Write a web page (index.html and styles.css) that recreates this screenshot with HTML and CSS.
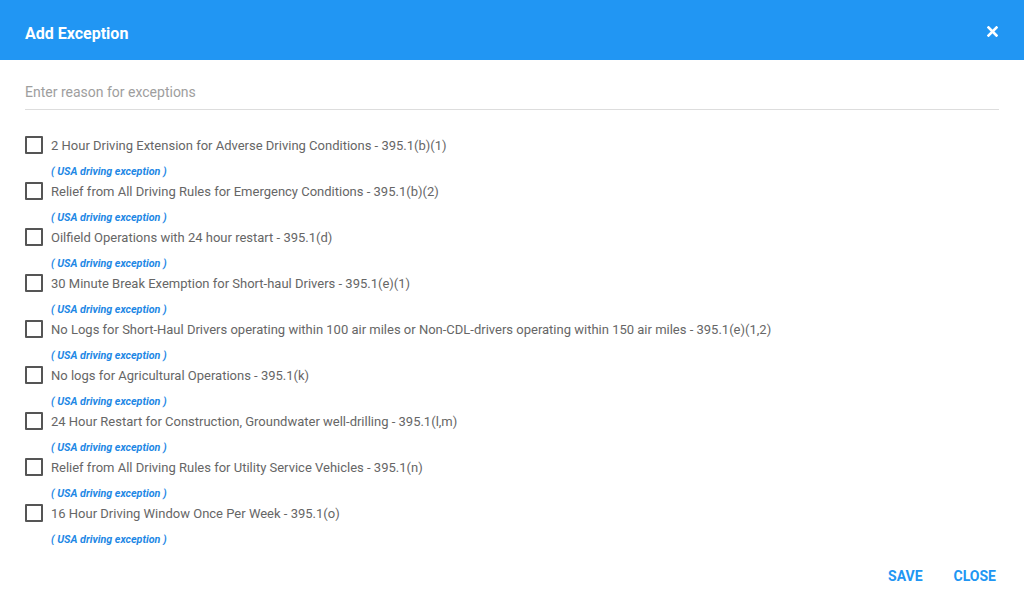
FILE: index.html
```html
<!DOCTYPE html>
<html lang="en">
<head>
    <meta charset="UTF-8">
    <meta name="viewport" content="width=device-width, initial-scale=1.0">
    <title>Add Exception</title>
    <link rel="stylesheet" href="styles.css">
</head>
<body>

    <div class="dialog">
        <div class="dialog-header">
            <h2>Add Exception</h2>
            <span class="close" title="Close">
                <svg width="11" height="11" viewBox="0 0 11 11">
                    <path d="M1.5 1.5 L9.5 9.5 M9.5 1.5 L1.5 9.5" stroke="#fff" stroke-width="2.6" stroke-linecap="square"/>
                </svg>
            </span>
        </div>

        <div class="dialog-body">
            <input type="text" class="reason" placeholder="Enter reason for exceptions">

            <ul class="exception-list">
                <li>
                    <label><input type="checkbox"><span class="box"></span>2 Hour Driving Extension for Adverse Driving Conditions - 395.1(b)(1)</label>
                    <div class="region">( USA driving exception )</div>
                </li>
                <li>
                    <label><input type="checkbox"><span class="box"></span>Relief from All Driving Rules for Emergency Conditions - 395.1(b)(2)</label>
                    <div class="region">( USA driving exception )</div>
                </li>
                <li>
                    <label><input type="checkbox"><span class="box"></span>Oilfield Operations with 24 hour restart - 395.1(d)</label>
                    <div class="region">( USA driving exception )</div>
                </li>
                <li>
                    <label><input type="checkbox"><span class="box"></span>30 Minute Break Exemption for Short-haul Drivers - 395.1(e)(1)</label>
                    <div class="region">( USA driving exception )</div>
                </li>
                <li>
                    <label><input type="checkbox"><span class="box"></span>No Logs for Short-Haul Drivers operating within 100 air miles or Non-CDL-drivers operating within 150 air miles - 395.1(e)(1,2)</label>
                    <div class="region">( USA driving exception )</div>
                </li>
                <li>
                    <label><input type="checkbox"><span class="box"></span>No logs for Agricultural Operations - 395.1(k)</label>
                    <div class="region">( USA driving exception )</div>
                </li>
                <li>
                    <label><input type="checkbox"><span class="box"></span>24 Hour Restart for Construction, Groundwater well-drilling - 395.1(l,m)</label>
                    <div class="region">( USA driving exception )</div>
                </li>
                <li>
                    <label><input type="checkbox"><span class="box"></span>Relief from All Driving Rules for Utility Service Vehicles - 395.1(n)</label>
                    <div class="region">( USA driving exception )</div>
                </li>
                <li>
                    <label><input type="checkbox"><span class="box"></span>16 Hour Driving Window Once Per Week - 395.1(o)</label>
                    <div class="region">( USA driving exception )</div>
                </li>
            </ul>
        </div>

        <div class="dialog-footer">
            <button class="flat-button">Save</button>
            <button class="flat-button">Close</button>
        </div>
    </div>

</body>
</html>
```

FILE: styles.css
```css
body {
    font-family: Roboto, "Liberation Sans", sans-serif;
    margin: 0;
    padding: 0;
    background-color: white;
}

.dialog {
    width: 1024px;
    height: 608px;
    display: flex;
    flex-direction: column;
    background: white;
}

.dialog-header {
    height: 60px;
    background-color: #2196F3;
    padding: 0 26px 0 25px;
    display: flex;
    align-items: center;
    justify-content: space-between;
    box-sizing: border-box;
}

.dialog-header h2 {
    margin: 6px 0 0;
    color: white;
    font-size: 16px;
    font-weight: bold;
}

.close {
    display: flex;
    margin-top: 2px;
    cursor: pointer;
}

.dialog-body {
    padding: 15px 25px 0;
}

.reason {
    display: block;
    width: 100%;
    height: 35px;
    box-sizing: border-box;
    border: none;
    border-bottom: 1px solid #ddd;
    padding: 0;
    font-family: inherit;
    font-size: 14px;
    color: #444;
    outline: none;
}

.reason::placeholder {
    color: #9e9e9e;
}

.exception-list {
    list-style: none;
    padding: 0;
    margin: 26px 0 0;
    height: 409px;
    overflow: hidden;
}

.exception-list li {
    height: 46px;
}

.exception-list label {
    display: flex;
    align-items: center;
    height: 18px;
    font-size: 13px;
    color: #666;
    cursor: pointer;
}

.exception-list input {
    display: none;
}

.box {
    width: 18px;
    height: 18px;
    box-sizing: border-box;
    border: 2px solid #555;
    border-radius: 1px;
    margin-right: 8px;
    flex-shrink: 0;
}

.exception-list input:checked + .box {
    background: #2196F3;
    border-color: #2196F3;
}

.region {
    margin: 11px 0 0 26px;
    line-height: 13px;
    font-size: 10.7px;
    font-style: italic;
    font-weight: bold;
    color: #1e88e5;
}

.dialog-footer {
    flex: 1;
    display: flex;
    justify-content: flex-end;
    align-items: flex-start;
    gap: 15px;
    padding: 22px 20px 0 0;
}

.flat-button {
    background: none;
    border: none;
    padding: 0 8px;
    font-family: inherit;
    font-size: 14px;
    font-weight: bold;
    text-transform: uppercase;
    color: #2196F3;
    line-height: 18px;
    cursor: pointer;
}
```
